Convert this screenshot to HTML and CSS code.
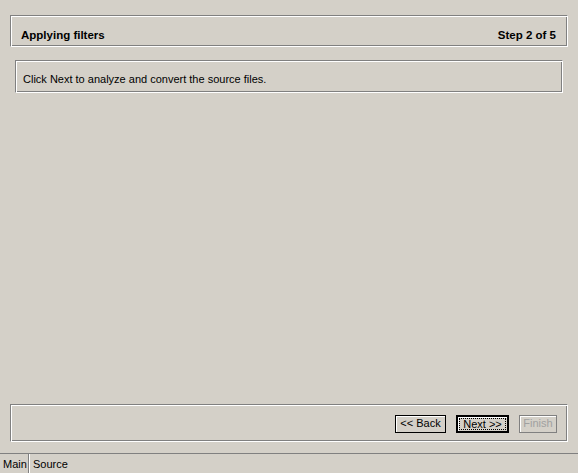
FILE: index.html
```html
<!DOCTYPE html>
<html>

<head>
    <meta http-equiv="Content-Type" content="text/html; charset=utf-8" />
    <title>Wizard</title>
    <link rel="stylesheet" href="styles.css">
</head>

<body>
    <div class="page">
        <div class="wiz_head">
            <span class="title">Applying filters</span>
            <span class="step">Step 2 of 5</span>
        </div>
        <div class="wiz_msg">Click Next to analyze and convert the source files.</div>
        <div class="wiz_body"></div>
        <div class="wiz_foot">
            <a class="btn btn_back">&lt;&lt; Back</a>
            <a class="btn btn_default"><span class="focus">Next &gt;&gt;</span></a>
            <a class="btn btn_off">Finish</a>
        </div>
        <div class="tabs">
            <a class="tab tab_on">Main</a>
            <a class="tab">Source</a>
        </div>
    </div>
</body>

</html>
```

FILE: styles.css
```css
    * {
        margin: 0;
        padding: 0;
        box-sizing: border-box;
    }

    body {
        background: #D4D0C8;
        font: 11px/13px "Liberation Sans", Arial, sans-serif;
        color: #000;
    }

    .page {
        height: 473px;
        display: flex;
        flex-direction: column;
    }

    .wiz_head,
    .wiz_msg,
    .wiz_foot {
        border: 1px solid;
        border-color: #808080 #FFFFFF #FFFFFF #808080;
        box-shadow: inset 1px 1px 0 #FFFFFF, inset -1px -1px 0 #808080;
    }

    .wiz_head {
        margin: 15px 0 0 10px;
        width: 558px;
        height: 32px;
        display: flex;
        justify-content: space-between;
        align-items: center;
        padding: 8px 11px 0 10px;
        font-weight: bold;
        font-size: 11.5px;
    }

    .wiz_msg {
        margin: 13px 0 0 15px;
        width: 548px;
        height: 33px;
        display: flex;
        align-items: center;
        padding: 6px 0 0 7px;
    }

    .wiz_body {
        flex: 1;
    }

    .wiz_foot {
        margin: 0 0 11px 10px;
        width: 558px;
        height: 38px;
        display: flex;
        justify-content: flex-end;
        align-items: center;
        gap: 10px;
        padding: 1px 10px 0 0;
    }

    .btn {
        display: flex;
        align-items: center;
        justify-content: center;
        height: 18px;
        border: 1px solid #000;
        box-shadow: inset 1px 1px 0 #FFFFFF;
        cursor: default;
    }

    .btn_back {
        width: 51px;
    }

    .btn_default {
        width: 53px;
        border-width: 2px;
    }

    .btn_default .focus {
        border: 1px dotted #000;
        width: 47px;
        height: 12px;
        line-height: 11px;
        text-align: center;
    }

    .btn_off {
        width: 38px;
        color: #A0A0A0;
        border-color: #808080;
    }

    .tabs {
        height: 20px;
        border-top: 1px solid #808080;
        display: flex;
        align-items: stretch;
    }

    .tab {
        padding: 4px 3px 0;
        cursor: default;
    }

    .tab_on {
        width: 30px;
        border-right: 1px solid #FFFFFF;
        box-shadow: inset -1px 0 0 #808080;
    }
```
